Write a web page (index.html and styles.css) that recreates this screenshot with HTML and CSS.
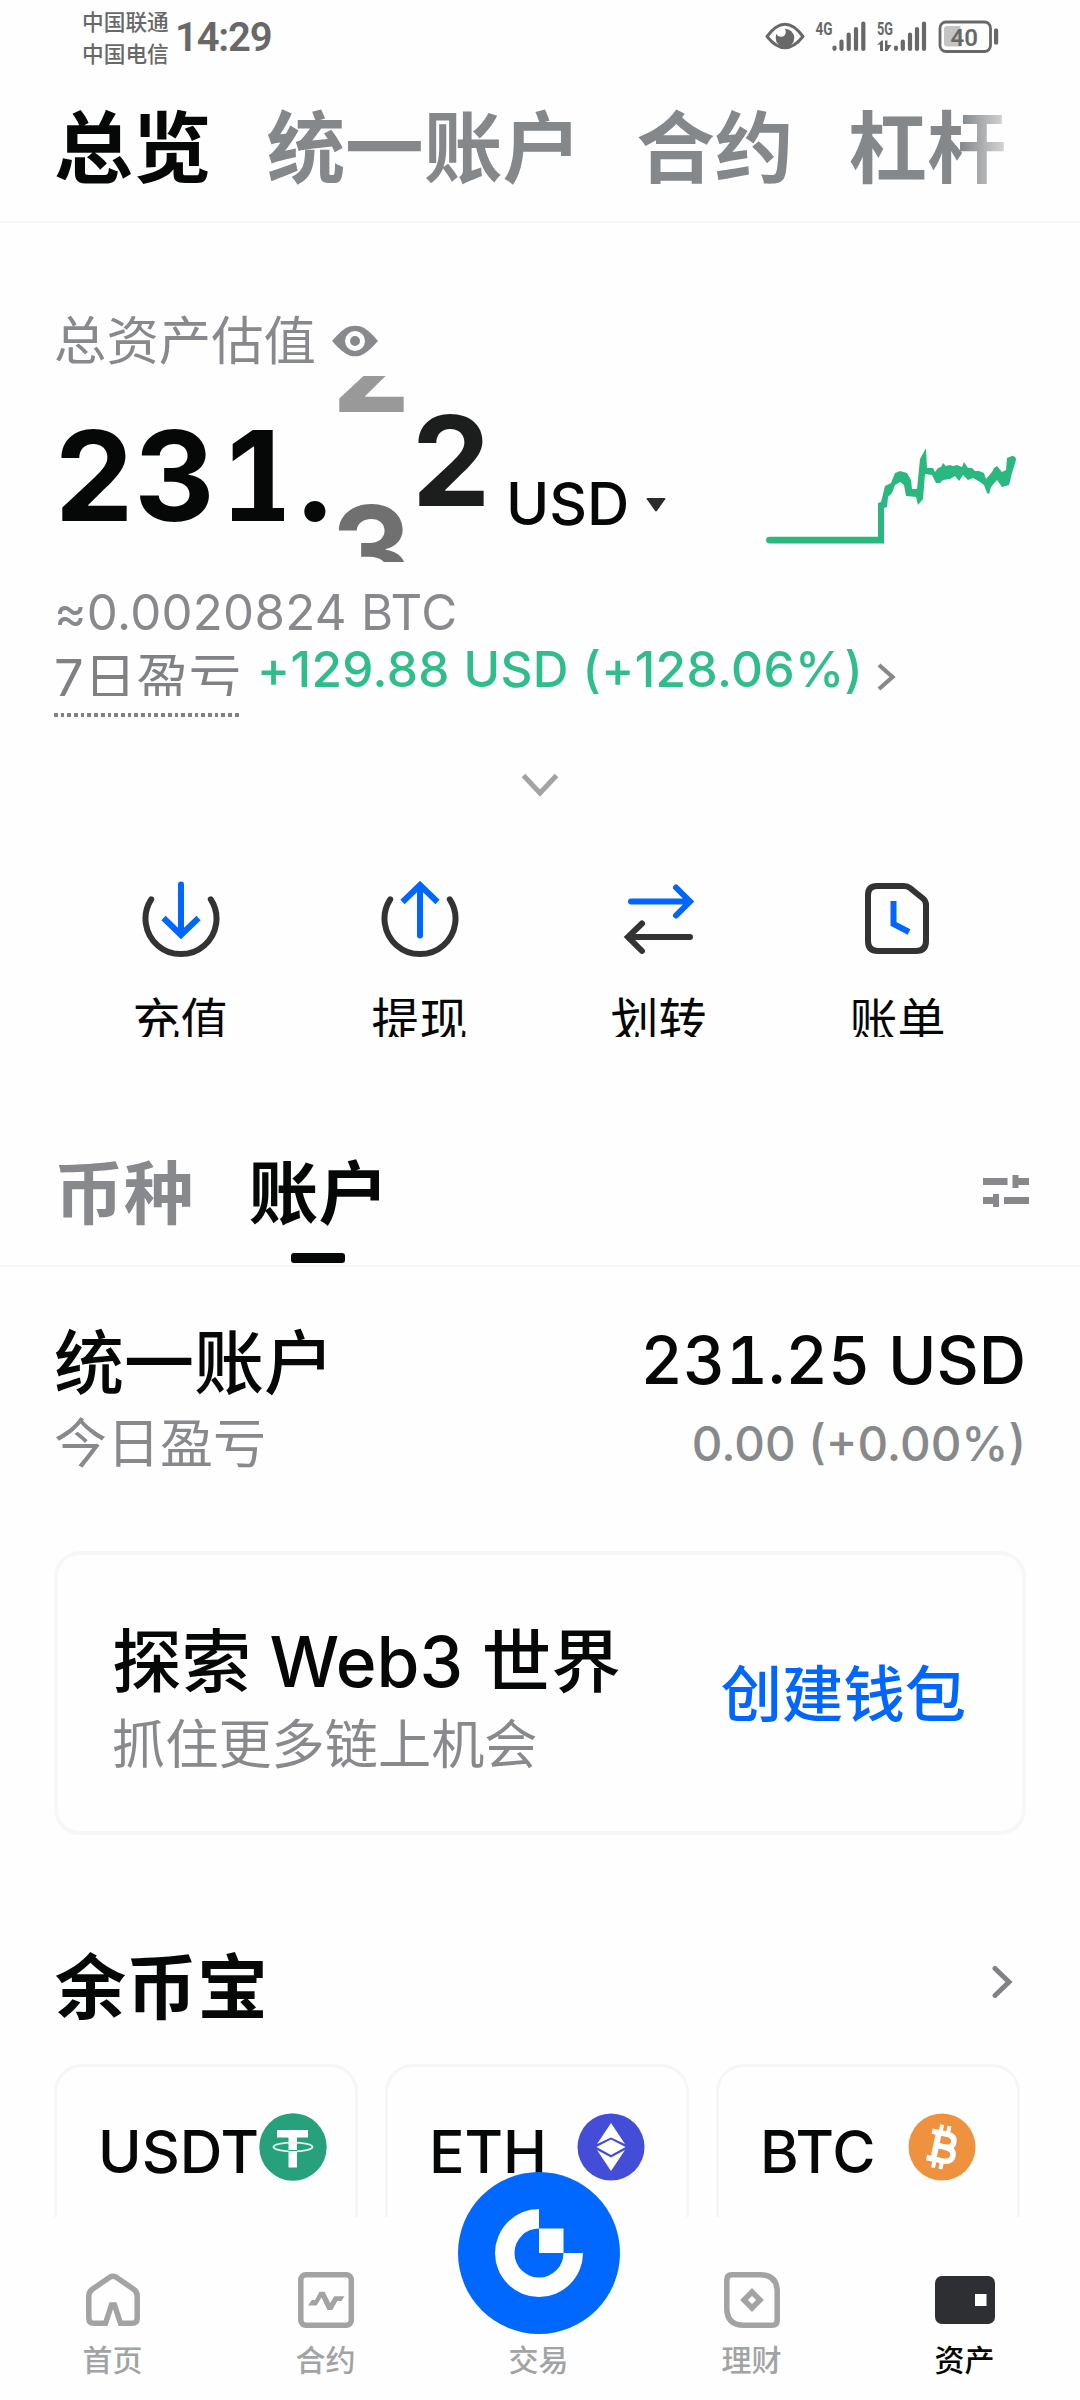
FILE: index.html
```html
<!DOCTYPE html>
<html lang="zh-CN">
<head>
<meta charset="utf-8">
<title>资产总览</title>
<link rel="stylesheet" href="styles.css">
</head>
<body>
<div class="screen">
  <main class="content">
    <header class="status">
      <div class="carriers"><span>中国联通</span><span>中国电信</span></div>
      <span class="clock">14:29</span>
      <svg class="status-icons" width="236" height="36" viewBox="764 18 236 36">
        <path d="M767 36.5Q785 12 803 36.500Q785 59 767 36.500Z" fill="none" stroke="#686868" stroke-width="3" stroke-linejoin="round"/>
        <circle cx="785" cy="38" r="9.300" fill="#686868"/>
        <circle cx="781" cy="32" r="4.800" fill="#fefefe"/>
        <g stroke="#686868" stroke-width="4.200" stroke-linecap="round">
          <path d="M834.500 47.500v1.300M841.500 41.500v7.500M848.700 34.500v14.500M856 29v20M863.300 23.500v25.500"/>
          <path d="M896 47.500v1.300M902.800 41.500v7.500M910 34.500v14.500M917 29v20M924 23.500v25.500"/>
        </g>
        <path d="M877 45l4.500-4.500h1.500v10.500h-3v-6.500zM885 40.500h2.500v4.500h4l-4 6h-2.500z" fill="#686868"/>
        <rect x="940" y="22" width="50.500" height="29.500" rx="6" fill="none" stroke="#686868" stroke-width="2.800"/>
        <path d="M944 29q0-3 3-3h13.500v20.500h-13.500q-3 0-3-3z" fill="#c4c4c4"/>
        <rect x="994" y="28.500" width="4.200" height="16" rx="1.500" fill="#686868"/>
        <text x="815.500" y="34.500" class="net" textLength="17" lengthAdjust="spacingAndGlyphs">4G</text>
        <text x="877" y="34.500" class="net" textLength="16" lengthAdjust="spacingAndGlyphs">5G</text>
        <text x="950.500" y="46" class="battery">40</text>
      </svg>
    </header>

    <nav class="top-tabs">
      <span class="current">总览</span><span>统一账户</span><span>合约</span><span>杠杆</span>
    </nav>

    <section class="overview">
      <div class="label-row">
        <span>总资产估值</span>
        <svg width="48" height="32" viewBox="0 0 48 32"><path d="M1 16Q12 3 19 1.300Q24 0 29 1.300Q36 3 47 16Q36 28.500 29 30.700Q24 32 19 30.700Q12 28.500 1 16Z" fill="#87898c"/><circle cx="24" cy="16" r="7.500" fill="none" stroke="#fefefe" stroke-width="5"/></svg>
      </div>
      <div class="balance">
        <span class="digits"><span>2</span><span>3</span><span class="one">1</span><span class="dot">.</span></span>
        <span class="roll roll-mid"><span class="out">2</span><span class="in">3</span></span>
        <span class="roll roll-end"><span>2</span></span>
        <span class="currency">USD</span>
        <svg class="caret" width="20" height="14" viewBox="0 0 20 14"><path d="M1.500 0h17q1.500 0 .7 1.300L11 12.800q-1 1.200-2 0L.8 1.300Q0 0 1.500 0Z" fill="#2b2a2d"/></svg>
        <svg class="spark" width="254" height="98" viewBox="764 448 254 98">
          <path d="M926 448L927 468H933L935 472L938 468L941 467L943 463L946 466L950 465L953 466L957 465L962 467L964 462L968 468L972 468L975 471L979 471L984 473L986 479L992 472L994 468L997 466L1002 472L1006 470L1007 458L1012 456Q1016 456 1016 460L1012 473L1009 485L1002 487L997 480L991 487L989 494L987 493L984 485L980 482L973 478L968 480L963 475L959 481L955 476L950 479L943 480L940 483H936L932 475L925 474L923 499L918 505L916 497L906 496L904 485L900 482L895 485L892 493L888 497L887 507L884 508V543.500H769.500A3.300 3.300 0 0 1 769.500 536.700H878V503L881 502L885 486L891 483L895 473L900 471L907 473L911 480L912 489H917L920 459Z" fill="#2bb880"/>
        </svg>
      </div>
      <div class="btc">≈<span>0.0020824</span> BTC</div>
      <div class="pnl">
        <div class="pnl-label"><span>7日盈亏</span></div>
        <span class="pnl-value">+129.88 USD (+128.06%)</span>
        <svg width="19" height="28" viewBox="0 0 19 28"><path d="M2 2L15.500 14L2 26" fill="none" stroke="#87888a" stroke-width="4.200"/></svg>
      </div>
      <div class="expand"><svg width="38" height="25" viewBox="0 0 38 25"><path d="M2.500 2.500L19 20L35.500 2.500" fill="none" stroke="#a2a3a4" stroke-width="5"/></svg></div>
    </section>

    <section class="actions">
      <div class="action">
        <svg width="80" height="78" viewBox="0 0 80 78" fill="none" stroke-width="6" stroke-linecap="round"><path d="M10.200 18.300A35.500 35.500 0 1 0 69.800 18.300" stroke="#333"/><path d="M40 3.500V53" stroke="#06f"/><path d="M22.500 37L40 54L57.500 37" stroke="#06f" stroke-linecap="butt"/></svg>
        <span>充值</span>
      </div>
      <div class="action">
        <svg width="80" height="78" viewBox="0 0 80 78" fill="none" stroke-width="6" stroke-linecap="round"><path d="M10.200 18.300A35.500 35.500 0 1 0 69.800 18.300" stroke="#333"/><path d="M40 6V54.500" stroke="#06f"/><path d="M22.500 21L40 4L57.500 21" stroke="#06f" stroke-linecap="butt"/></svg>
        <span>提现</span>
      </div>
      <div class="action">
        <svg width="80" height="78" viewBox="0 0 80 78" fill="none" stroke-width="6" stroke-linecap="round"><path d="M12 20.500H70M57 6.500L71 20.500L57 34.500" stroke="#06f"/><path d="M71 56H11M23 42.500L9 56L23 70" stroke="#333"/></svg>
        <span>划转</span>
      </div>
      <div class="action">
        <svg width="80" height="78" viewBox="0 0 80 78" fill="none" stroke-width="6"><path d="M19 5H46Q49.500 5 52 7L65 17.500Q68 20 68 24V60Q68 70 58 70H20Q10 70 10 60V14Q10 5 19 5Z" stroke="#333"/><path d="M35.500 20V43L51 51" stroke="#06f"/></svg>
        <span>账单</span>
      </div>
    </section>

    <div class="sub-tabs">
      <span>币种</span><span class="current">账户</span>
      <svg width="46" height="32" viewBox="0 0 46 32" fill="#87888b"><path d="M0 3h24.500v7H0zM29.500 0h6v3H46v7H35.500v3h-6zM0 22h10v-3h6v13h-6v-3H0zM21 22h25v7H21z"/></svg>
    </div>

    <section class="account">
      <div class="line"><span>统一账户</span><span class="amount">231.25 USD</span></div>
      <div class="line minor"><span>今日盈亏</span><span class="change">0.00 (+0.00%)</span></div>
    </section>

    <section class="web3">
      <div><div class="web3-title">探索 <span>Web3</span> 世界</div><div class="web3-sub">抓住更多链上机会</div></div>
      <span class="web3-link">创建钱包</span>
    </section>

    <div class="earn-head">
      <span>余币宝</span>
      <svg width="21" height="32" viewBox="0 0 21 32"><path d="M3 2.500L17 16L3 29.500" fill="none" stroke="#818285" stroke-width="5" stroke-linecap="round"/></svg>
    </div>
    <section class="coins">
      <div class="coin"><span>USDT</span>
        <svg width="68" height="68" viewBox="0 0 68 68"><circle cx="34" cy="34" r="33.700" fill="#26a17b"/><path d="M18 17h31v7.500H38V54.500H29.500V24.500H18z" fill="#fff"/><ellipse cx="34" cy="34" rx="19.500" ry="4.300" fill="none" stroke="#dff3ec" stroke-width="1.800"/><path d="M29.500 37.500h8.500" stroke="#26a17b" stroke-width="1"/></svg>
      </div>
      <div class="coin"><span>ETH</span>
        <svg width="68" height="68" viewBox="0 0 68 68"><circle cx="34" cy="34" r="33.500" fill="#444dd8"/><path d="M34 10L48 31L34 24.500L20 31ZM34 26.500L48.500 34L34 42L19.500 34ZM20 37L34 44.500L48 37L34 58Z" fill="#fff"/></svg>
      </div>
      <div class="coin"><span>BTC</span>
        <svg width="68" height="68" viewBox="0 0 68 68"><circle cx="34" cy="34" r="33.500" fill="#ee9240"/><g transform="rotate(12 34 34)" fill="none" stroke="#fff"><path d="M21 20.500H36.500Q44.500 20.500 44.500 27T36.500 33.500H28M36.500 33.500Q46.500 33.500 46.500 40.500T37 47.500H21" stroke-width="5.500"/><path d="M28 20V48" stroke-width="6"/><path d="M29.500 12V20M37 12V20M29.500 48V56M37 48V56" stroke-width="4"/></g></svg>
      </div>
    </section>
  </main>

  <nav class="bottom-nav">
    <div class="nav-item">
      <svg width="60" height="60" viewBox="0 0 60 60" fill="none" stroke="#a2a3a4" stroke-width="5.500"><path d="M22.500 51.300H11Q5.800 51.300 5.800 46V24Q5.800 20 9 17.500L27 5Q30 3.500 33 5L51 17.500Q54.200 20 54.200 24V46Q54.200 51.300 49 51.300H37.500L31.500 33H28.500Z" /></svg>
      <span>首页</span>
    </div>
    <div class="nav-item">
      <svg width="60" height="60" viewBox="0 0 60 60"><rect x="4.800" y="2.800" width="50.500" height="50.500" rx="5" fill="none" stroke="#a2a3a4" stroke-width="5.500"/><path d="M15.800 28L12 33.500H20.500L25.500 25.500L31.500 38H36.300L41.300 29H45.500L48.500 24.300H38.200L34.200 31L28.500 19.700H23.500L19 28Z" fill="#a2a3a4"/></svg>
      <span>合约</span>
    </div>
    <div class="nav-item trade">
      <svg class="trade-button" width="162" height="162" viewBox="0 0 162 162"><circle cx="81" cy="81" r="81" fill="#0068ff"/><path d="M81 37A44 44 0 1 0 125 81H105.500A24.500 24.500 0 1 1 81 56.500ZM81 56.500H105.500V81H81Z" fill="#fff"/></svg>
      <span>交易</span>
    </div>
    <div class="nav-item">
      <svg width="60" height="60" viewBox="0 0 60 60" fill="none" stroke="#a2a3a4" stroke-width="5.500"><path d="M9.800 2.800H38Q55.200 2.800 55.200 20V48Q55.200 53.300 50 53.300H22Q4.800 53.300 4.800 36V8Q4.800 2.800 9.800 2.800Z"/><path d="M30 20L38 28L30 36L22 28Z" stroke-width="5.500"/></svg>
      <span>理财</span>
    </div>
    <div class="nav-item active">
      <svg width="60" height="60" viewBox="0 0 60 60"><rect x="0" y="4" width="60" height="48" rx="7" fill="#2e2f32"/><rect x="40" y="22" width="11.500" height="12" fill="#fff"/></svg>
      <span>资产</span>
    </div>
  </nav>
</div>
</body>
</html>
```
FILE: styles.css
```css
* { box-sizing: border-box; }
body {
  margin: 0;
  background: #fefefe;
  color: #060707;
  font-family: Inter, "Noto Sans CJK SC", sans-serif;
}
svg { display: block; flex: none; }
span { white-space: nowrap; }
.screen { width: 1080px; height: 2400px; display: flex; flex-direction: column; overflow: hidden; }
.content { height: 2217px; overflow: hidden; display: flex; flex-direction: column; }
.content > * { flex: none; }

.status { height: 70px; padding: 5px 80px 0 82px; display: flex; align-items: flex-start; color: #686868; }
.carriers { display: flex; flex-direction: column; font-size: 21.7px; line-height: 32px; font-weight: 500; width: 93px; padding-top: 1px; }
.clock { font-family: Roboto, sans-serif; font-size: 40px; line-height: 66px; font-weight: 600; letter-spacing: -1.2px; }
.status-icons { margin: 13px 0 0 auto; fill: #686868; }
.net { font: 700 18.500px Roboto, sans-serif; fill: #686868; }
.battery { font: 600 24px Roboto, sans-serif; fill: #686868; }

.top-tabs {
  height: 153px; padding: 7px 0 0 54px; border-bottom: 2px solid #f7f7f7;
  display: flex; align-items: center; gap: 55px;
  font-size: 78.700px; line-height: 90px; font-weight: 700; color: #85888b;
}
.top-tabs span:last-child { -webkit-mask-image: linear-gradient(to right, #000 112px, rgba(0,0,0,.35) 156px); mask-image: linear-gradient(to right, #000 112px, rgba(0,0,0,.35) 156px); }
.top-tabs .current, .sub-tabs .current { color: #060707; }

.overview { height: 658px; padding: 88px 54px 0; }
.label-row { height: 65px; display: flex; gap: 15px; font-size: 52.400px; line-height: 60px; color: #87898c; }
.label-row svg { margin-top: 14px; }

.balance { height: 186px; overflow: hidden; display: flex; align-items: flex-start; font-size: 125px; line-height: 184px; font-weight: 700; }
.digits { display: flex; margin-top: 8px; width: 277px; }
.digits span { width: 80px; text-align: center; }
.digits .dot { width: 36px; }
.digits .one { position: relative; }
/* foot of the slab "1" */
.digits .one::after { content: ""; position: absolute; left: 18px; top: 124px; width: 52px; height: 13px; background: currentColor; }
.roll { display: flex; flex-direction: column; width: 80px; text-align: center; }
.roll-mid { margin-top: -101px; }
.roll-end { margin-top: -7px; color: #1c1d1d; }
.out { color: #999; }
.in { color: #707070; }
.currency { font-size: 58.500px; line-height: 58px; font-weight: 500; margin: 99px 0 0 15px; }
.caret { margin: 122px 0 0 17px; }
.spark { margin: 72px 8px 0 auto; }

.btc { margin-top: 22px; height: 56px; font-size: 49.200px; line-height: 56px; letter-spacing: .3px; color: #87898c; white-space: nowrap; }
.pnl { height: 77px; display: flex; align-items: flex-start; }
.pnl-label {
  width: 186px; height: 77px; color: #7f8184; font-size: 52.500px; line-height: 77px;
  background: repeating-linear-gradient(to right, #7f8184 0 3.700px, transparent 3.700px 6.700px) bottom / 100% 4px no-repeat;
}
.pnl-label span { display: block; height: 56px; overflow: hidden; }
.pnl-value { margin-left: 17px; width: 606px; font-size: 49.500px; line-height: 58px; letter-spacing: .4px; font-weight: 500; color: #31bd8b; }
.pnl svg { margin: 23px 0 0 14px; }
.expand { display: flex; justify-content: center; padding-top: 56px; }

.actions { height: 156px; padding: 0 61px; display: grid; grid-template-columns: repeat(4, 239px); }
.action { display: flex; flex-direction: column; align-items: center; gap: 31px; }
.action span { height: 47px; overflow: hidden; font-size: 48px; line-height: 61px; }

.sub-tabs {
  height: 230px; padding: 83px 51px 0 54px; border-bottom: 2px solid #f6f7f7;
  display: flex; align-items: center; gap: 55px; font-size: 69.800px; line-height: 80px; font-weight: 700; color: #87898c;
}
.sub-tabs span { height: 145px; padding-top: 34px; }
.sub-tabs .current { display: flex; flex-direction: column; justify-content: space-between; align-items: center; }
.sub-tabs .current::after { content: ""; width: 54px; height: 10px; border-radius: 3px; background: #060707; margin-bottom: 2px; }
.sub-tabs svg { margin: 0 0 3px auto; }

.account { height: 284px; padding: 55px 54px 0 54px; }
.line { height: 80px; display: flex; justify-content: space-between; font-size: 70px; line-height: 83px; font-weight: 500; }
.amount { font-size: 65.500px; line-height: 78px; font-variant-numeric: tabular-nums; }
.minor { font-size: 53px; line-height: 84px; font-weight: 400; color: #87898c; }
.change { font-size: 47.500px; font-weight: 500; }

.web3 {
  margin: 0 54px; height: 284px; padding: 67px 56px 0 54px; border: 4px solid #f6f7f7; border-radius: 26px;
  display: flex; justify-content: space-between;
}
.web3-title { font-size: 69.500px; line-height: 80px; font-weight: 500; white-space: nowrap; }
.web3-sub { font-size: 53.200px; line-height: 86px; color: #87898c; }
.web3-link { font-size: 61.300px; line-height: 147px; font-weight: 500; color: #06f; }

.earn-head { height: 229px; padding: 109px 67px 0 55px; display: flex; justify-content: space-between; font-size: 71px; line-height: 86px; font-weight: 700; }
.earn-head svg { margin-top: 22px; }
.coins { display: flex; gap: 27px; padding-left: 54px; }
.coin {
  width: 304px; height: 300px; padding: 46px 41px 0; border: 3px solid #f5f6f6; border-radius: 28px;
  display: flex; justify-content: space-between; align-items: flex-start; font-size: 59px; line-height: 78px; font-weight: 500;
}
.coin span { flex: none; }

.bottom-nav { position: relative; height: 183px; padding: 52px 6px 0; display: grid; grid-template-columns: repeat(5, 213px); color: #a2a3a4; }
.nav-item { display: flex; flex-direction: column; align-items: center; font-size: 30px; line-height: 38px; font-weight: 500; padding-top: 3px; }
.nav-item span { margin-top: 9px; }
.trade { padding-top: 63px; }
.trade-button { position: absolute; left: 458px; top: -45px; }
.active { color: #060707; }
```
